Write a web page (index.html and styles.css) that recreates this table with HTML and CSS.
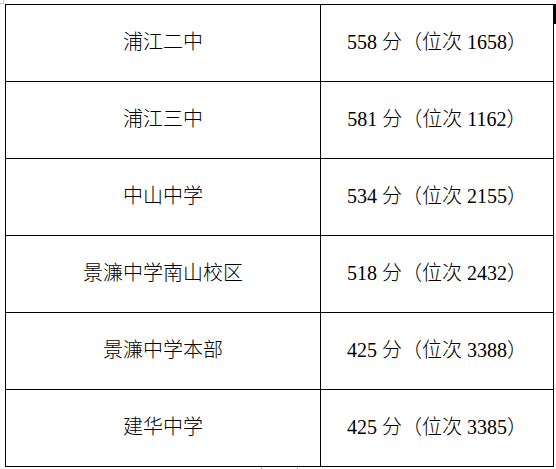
FILE: index.html
```html
<!DOCTYPE html>
<html lang="zh-CN">
<head>
<meta charset="utf-8">
<title>分数位次</title>
<link rel="stylesheet" href="styles.css">
</head>
<body>
<div class="page">
  <span class="mark mark-tl"></span>
  <span class="mark mark-tr"></span>
  <span class="mark mark-b1"></span>
  <span class="mark mark-b2"></span>
  <div class="score-table">
    <div class="cell">浦江二中</div>
    <div class="cell">558 分（位次 1658）</div>
    <div class="cell">浦江三中</div>
    <div class="cell">581 分（位次 1162）</div>
    <div class="cell">中山中学</div>
    <div class="cell">534 分（位次 2155）</div>
    <div class="cell">景濂中学南山校区</div>
    <div class="cell">518 分（位次 2432）</div>
    <div class="cell">景濂中学本部</div>
    <div class="cell">425 分（位次 3388）</div>
    <div class="cell">建华中学</div>
    <div class="cell">425 分（位次 3385）</div>
  </div>
</div>
</body>
</html>
```
FILE: styles.css
```css
html, body {
  margin: 0;
  padding: 0;
  background: #fff;
}
.page {
  position: relative;
  width: 556px;
  height: 469px;
  padding: 4px 0 0 5px;
  box-sizing: border-box;
}
.score-table {
  display: grid;
  grid-template-columns: 315px 233px;
  grid-auto-rows: 77px;
  width: 549px;
  border-top: 1px solid #000;
  border-left: 1px solid #000;
  box-sizing: border-box;
  font-family: "Liberation Serif", "Noto Sans CJK SC", serif;
  font-size: 20px;
  font-weight: 300;
  line-height: 20px;
  color: #000;
}
.cell {
  display: flex;
  align-items: center;
  justify-content: center;
  padding-bottom: 3px;
  box-sizing: border-box;
  border-right: 1px solid #000;
  border-bottom: 1px solid #000;
  white-space: nowrap;
}
.mark {
  position: absolute;
  display: block;
}
.mark-tl {
  left: 0;
  top: 0;
  width: 3px;
  height: 3px;
  border-right: 1px solid #c8c8c8;
  border-bottom: 1px solid #c8c8c8;
}
.mark-tr {
  left: 554px;
  top: 4px;
  width: 2px;
  height: 20px;
  background: #000;
}
.mark-b1, .mark-b2 {
  top: 467px;
  width: 1px;
  height: 2px;
  background: #b0b0b0;
}
.mark-b1 { left: 261px; }
.mark-b2 { left: 297px; }
```
